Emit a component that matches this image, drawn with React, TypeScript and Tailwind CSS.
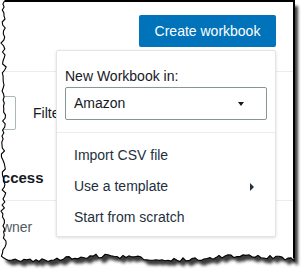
import { ReactNode } from "react";

// deterministic jitter for the torn paper edge
const rand = (i: number) => {
    const x = Math.sin(i * 12.9898 + 78.233) * 43758.5453;
    return x - Math.floor(x);
};

const RIGHT = 294;
const BOTTOM = 258;

const leftPts: [number, number][] = [];
for (let y = 1; y <= BOTTOM; y += 3) {
    leftPts.push([3.5 + (rand(y) - 0.5) * 4 + Math.sin(y / 9) * 0.8, y]);
}
const bottomPts: [number, number][] = [];
for (let x = 3; x <= RIGHT; x += 3) {
    bottomPts.push([x, BOTTOM + (rand(x + 500) - 0.5) * 4 + Math.sin(x / 22) * 2]);
}

const jagged =
    leftPts.map(([x, y], i) => `${i ? "L" : "M"}${x.toFixed(1)} ${y.toFixed(1)}`).join(" ") +
    " " +
    bottomPts.map(([x, y]) => `L${x.toFixed(1)} ${y.toFixed(1)}`).join(" ") +
    ` L${RIGHT} ${BOTTOM}`;

const paper = `M${leftPts[0][0].toFixed(1)} 1 L${RIGHT} 1 L${RIGHT} ${BOTTOM} ` +
    [...bottomPts].reverse().map(([x, y]) => `L${x.toFixed(1)} ${y.toFixed(1)}`).join(" ") + " " +
    [...leftPts].reverse().map(([x, y]) => `L${x.toFixed(1)} ${y.toFixed(1)}`).join(" ") + " Z";

const outside = `M0 0 H304 V275 H0 Z ${paper}`;

function TornFrame() {
    return (
        <svg className="absolute inset-0 pointer-events-none" width="304" height="275" viewBox="0 0 304 275">
            <defs>
                <clipPath id="outside">
                    <path d={outside} clipRule="evenodd" />
                </clipPath>
                <filter id="blur" x="-10%" y="-10%" width="120%" height="120%">
                    <feGaussianBlur stdDeviation="1.6" />
                </filter>
            </defs>
            <path d={outside} fill="#fff" fillRule="evenodd" />
            <g clipPath="url(#outside)">
                <path d={paper} transform="translate(4 5)" fill="#3a3a3a" filter="url(#blur)" />
            </g>
            <path d={jagged} fill="none" stroke="#000" strokeWidth="1.1" />
            <path d={`M${leftPts[0][0].toFixed(1)} 1 L${RIGHT} 1 L${RIGHT} ${BOTTOM}`} fill="none" stroke="#000" strokeWidth="2" />
        </svg>
    );
}

function MenuItem({ children, arrow }: { children: ReactNode; arrow?: boolean }) {
    return (
        <div className="h-[31px] flex items-center justify-between pl-[17px] pr-[21px] text-[#232f3e]">
            <span>{children}</span>
            {arrow && <span className="w-0 h-0 border-y-[4px] border-y-transparent border-l-[4px] border-l-[#232f3e]" />}
        </div>
    );
}

export default function App() {
    return (
        <div
            className="relative w-[304px] h-[275px] overflow-hidden bg-white text-[14px] text-[#16191f]"
            style={{ fontFamily: '"Liberation Sans", Arial, sans-serif' }}
        >
            {/* page behind the menu */}
            <div className="w-[294px]">
                <div className="h-[72px] border-b border-[#eaeded] flex justify-end items-start pt-[15px] pr-[18px]">
                    <button className="h-[32px] w-[137px] rounded-[2px] bg-[#0073bb] text-white text-[14px]">
                        Create workbook
                    </button>
                </div>
                <div className="flex items-center mt-[24px] h-[34px]">
                    <div className="ml-[-20px] w-[36px] h-[34px] border border-[#aab7b8] rounded-[2px]" />
                    <span className="ml-[17px] text-[#16191f]">Filter</span>
                </div>
                <div className="h-[71px] border-b border-[#eaeded] flex items-end pb-[12px] ml-[-9px]">
                    <span className="font-bold text-[15px] leading-[20px]">Access</span>
                </div>
                <div className="ml-[-9px] mt-[16px] leading-[20px] text-[#545b64]">Owner</div>
            </div>

            {/* dropdown menu */}
            <div className="absolute left-[56px] top-[50px] w-[220px] bg-white border border-[#e2e5e6] rounded-[2px] shadow-[0_1px_3px_rgba(0,28,36,0.15)]">
                <div className="px-[8px] pt-[15px] pb-[12px] border-b border-[#eaeded]">
                    <div className="leading-[20px] text-[#16191f]">New Workbook in:</div>
                    <div className="mt-[1px] h-[33px] border border-[#879596] rounded-[2px] flex items-center justify-between pl-[8px] pr-[22px]">
                        <span>Amazon</span>
                        <span className="w-0 h-0 border-x-[3px] border-x-transparent border-t-[4px] border-t-[#16191f]" />
                    </div>
                </div>
                <div className="pt-[7px] pb-[3px]">
                    <MenuItem>Import CSV file</MenuItem>
                    <MenuItem arrow>Use a template</MenuItem>
                    <MenuItem>Start from scratch</MenuItem>
                </div>
            </div>

            <TornFrame />
        </div>
    );
}
